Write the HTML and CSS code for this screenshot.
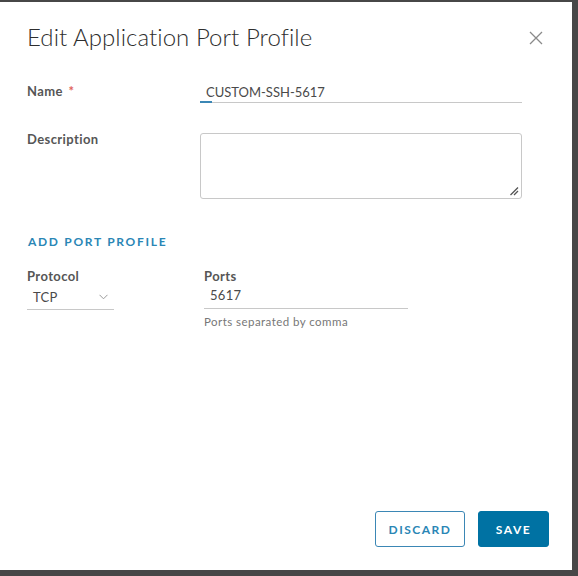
FILE: index.html
```html
<!DOCTYPE html>
<html>
<head>
<meta charset="utf-8">
<link rel="stylesheet" href="styles.css">
</head>
<body>
<div class="modal">
  <div class="header">
    <h1 class="title">Edit Application Port Profile</h1>
    <button class="close" aria-label="Close">
      <svg width="14" height="14" viewBox="0 0 14 14"><path d="M1 1 L13 13 M13 1 L1 13" stroke="#8a8a8a" stroke-width="1.3" fill="none"/></svg>
    </button>
  </div>
  <div class="body">
    <div class="row name-row">
      <label class="label">Name <span class="req">*</span></label>
      <div class="input-wrap">
        <div class="input-text">CUSTOM-SSH-5617</div>
        <div class="underline"><span class="focus"></span></div>
      </div>
    </div>
    <div class="row desc-row">
      <label class="label">Description</label>
      <div class="textarea">
        <svg class="grip" width="10" height="10" viewBox="0 0 10 10"><path d="M1.5 9 L9 1.5 M5 9 L9 5" stroke="#555" stroke-width="1.3" fill="none"/></svg>
      </div>
    </div>
    <div class="add-link">ADD PORT PROFILE</div>
    <div class="port-row">
      <div class="protocol">
        <div class="label">Protocol</div>
        <div class="select">
          <span>TCP</span>
          <svg width="9" height="6" viewBox="0 0 9 6"><path d="M0.5 0.8 L4.5 4.8 L8.5 0.8" stroke="#9a9a9a" stroke-width="1" fill="none"/></svg>
        </div>
      </div>
      <div class="ports">
        <div class="label">Ports</div>
        <div class="ports-input">5617</div>
        <div class="helper">Ports separated by comma</div>
      </div>
    </div>
  </div>
  <div class="footer">
    <button class="btn btn-outline">DISCARD</button>
    <button class="btn btn-primary">SAVE</button>
  </div>
</div>
</body>
</html>
```
FILE: styles.css
```css
html, body {
  margin: 0;
  padding: 0;
  background: #474747;
  width: 578px;
  height: 576px;
  overflow: hidden;
}
body {
  font-family: Lato, "Noto Sans", sans-serif;
  color: #565656;
}
.modal {
  margin-top: 2px;
  width: 572px;
  height: 568px;
  background: #fff;
  box-sizing: border-box;
  display: flex;
  flex-direction: column;
  position: relative;
}
.header {
  display: flex;
  align-items: center;
  justify-content: space-between;
  padding: 19px 29px 0 27px;
  height: 30px;
}
.title {
  margin: 0;
  font-weight: 300;
  font-size: 24px;
  color: #2e2e2e;
  letter-spacing: 0.05px;
}
.close {
  border: 0;
  background: none;
  padding: 0;
  width: 14px;
  height: 14px;
  display: flex;
  margin-top: 3px;
}
.body {
  padding: 0 27px;
  flex: 1;
}
.label {
  font-size: 13px;
  font-weight: 700;
  color: #565656;
  letter-spacing: 0.4px;
}
.req {
  color: #e0625a;
  font-weight: 700;
  margin-left: 2px;
}
.row {
  display: flex;
}
.row .label {
  width: 173px;
  flex: none;
}
.name-row {
  margin-top: 31px;
  align-items: flex-start;
}
.name-row .label {
  padding-top: 1px;
}
.input-wrap {
  width: 322px;
}
.input-text {
  font-size: 13px;
  color: #4a4a4a;
  padding-left: 6px;
  height: 20px;
  line-height: 20px;
}
.underline {
  height: 1px;
  background: #c8c8c8;
  position: relative;
}
.focus {
  position: absolute;
  left: 0;
  top: -1px;
  width: 12px;
  height: 2px;
  background: #3b87b5;
}
.desc-row {
  margin-top: 30px;
}
.desc-row .label {
  margin-top: -2px;
}
.textarea {
  width: 322px;
  height: 66px;
  box-sizing: border-box;
  border: 1px solid #c8c8c8;
  border-radius: 3px;
  position: relative;
}
.grip {
  position: absolute;
  right: 2px;
  bottom: 2px;
}
.add-link {
  margin-top: 35px;
  font-size: 12px;
  font-weight: 700;
  color: #2a86b5;
  letter-spacing: 1.7px;
  padding-left: 1px;
}
.port-row {
  display: flex;
  margin-top: 19px;
}
.protocol {
  width: 177px;
  flex: none;
}
.select {
  width: 87px;
  height: 26px;
  box-sizing: border-box;
  border-bottom: 1px solid #c8c8c8;
  display: flex;
  align-items: center;
  justify-content: space-between;
  padding: 0 6px 0 6px;
  font-size: 13px;
  color: #4a4a4a;
  letter-spacing: 0.3px;
}
.ports {
  width: 204px;
}
.ports-input {
  height: 25px;
  box-sizing: border-box;
  border-bottom: 1px solid #c8c8c8;
  padding-left: 6px;
  font-size: 13px;
  color: #4a4a4a;
  line-height: 22px;
  letter-spacing: 0.3px;
}
.helper {
  margin-top: 6px;
  font-size: 11.5px;
  color: #777;
  letter-spacing: 0.45px;
}
.footer {
  display: flex;
  justify-content: flex-end;
  gap: 13px;
  padding: 0 23px 23px 0;
}
.btn {
  height: 36px;
  box-sizing: border-box;
  border-radius: 3px;
  font-family: Lato, "Noto Sans", sans-serif;
  font-size: 12px;
  font-weight: 700;
  letter-spacing: 1.5px;
  padding: 0;
}
.btn-outline {
  width: 90px;
  background: #fff;
  border: 1px solid #3b87b5;
  color: #2a86b5;
}
.btn-primary {
  width: 71px;
  background: #0072a3;
  border: 1px solid #0072a3;
  color: #fff;
}
```
